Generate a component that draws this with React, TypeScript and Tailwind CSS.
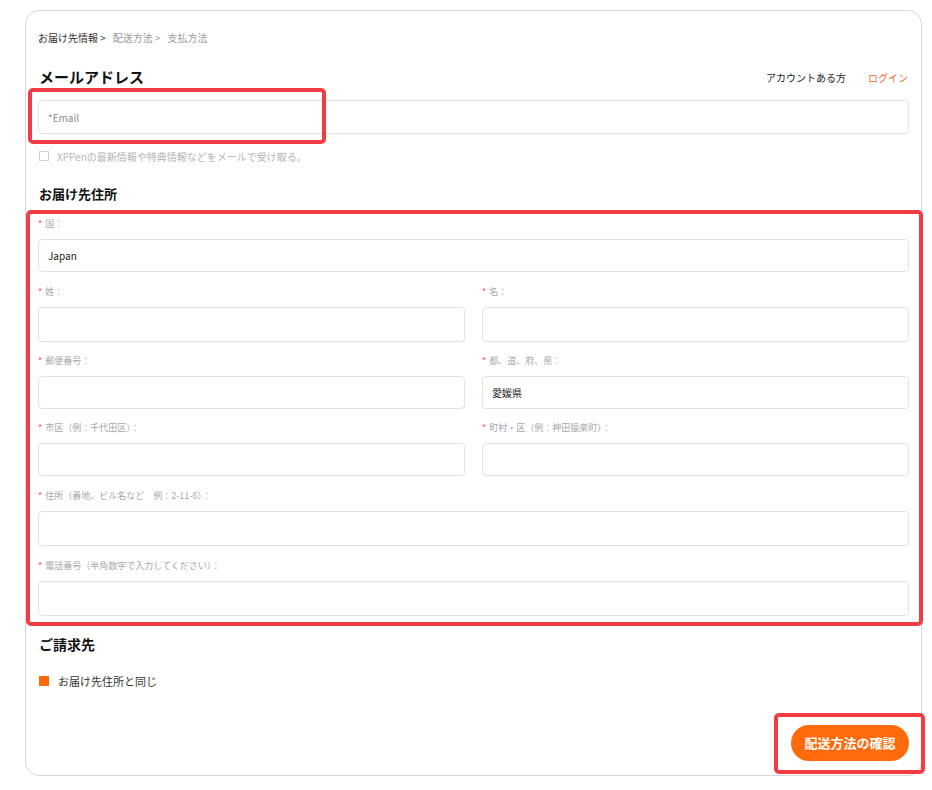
const font = { fontFamily: '"Noto Sans CJK JP", "Noto Sans", sans-serif' }

function Label({ text }: { text: string }) {
  return (
    <div className="flex h-[12px] items-center gap-[3px] text-[9px] leading-[12px] text-[#a8a8a8]">
      <span className="text-[#f05050]">*</span>
      <span>{text}</span>
    </div>
  )
}

function Field({
  label,
  value,
  h = "h-[34px]",
}: {
  label: string
  value?: string
  h?: string
}) {
  return (
    <div className="flex flex-col">
      <Label text={label} />
      <div
        className={`mt-[9px] flex ${h} items-center rounded-[4px] border border-[#e2e2e2] bg-white px-[9px] text-[10px] text-[#222]`}
      >
        {value}
      </div>
    </div>
  )
}

export default function App() {
  return (
    <div className="relative h-[790px] w-[932px] bg-white" style={font}>
      <div className="ml-[25px] pt-[10px]">
        <div className="flex h-[766px] w-[897px] flex-col rounded-[14px] border border-[#d6d6d6] px-[12px]">
          <div className="mt-[20px] flex items-center gap-[7px] text-[10px] leading-[14px] text-[#9a9a9a]">
            <span className="text-[#333]">お届け先情報 &gt;</span>
            <span>配送方法 &gt;</span>
            <span>支払方法</span>
          </div>

          <div className="mt-[22px] flex items-center justify-between pl-[1px] pr-[1px]">
            <h2 className="text-[15px] font-bold leading-[20px] text-[#111]">メールアドレス</h2>
            <div className="flex items-center gap-[22px] text-[10px]">
              <span className="text-[#222]">アカウントある方</span>
              <span className="text-[#f0702a]">ログイン</span>
            </div>
          </div>

          <div className="mt-[13px] flex h-[34px] items-center rounded-[4px] border border-[#e2e2e2] px-[9px] text-[10px] text-[#8a8a8a]">
            *Email
          </div>

          <div className="mt-[15px] flex h-[14px] items-center gap-[8px] pl-[1px] text-[10px] text-[#b5b5b5]">
            <span className="h-[10px] w-[10px] border border-[#cfcfcf]" />
            <span>XPPenの最新情報や特典情報などをメールで受け取る。</span>
          </div>

          <h3 className="mt-[22px] pl-[1px] text-[13px] font-bold leading-[18px] text-[#111]">お届け先住所</h3>

          <div className="mt-[15px] flex flex-col gap-[14px]">
            <Field label="国：" value="Japan" h="h-[33px]" />
            <div className="grid grid-cols-2 gap-x-[17px] gap-y-[13px]">
              <Field label="姓：" h="h-[35px]" />
              <Field label="名：" h="h-[35px]" />
              <Field label="郵便番号：" h="h-[33px]" />
              <Field label="都、道、府、県：" value="愛媛県" h="h-[33px]" />
              <Field label="市区（例：千代田区）：" h="h-[33px]" />
              <Field label="町村・区（例：神田猿楽町）：" h="h-[33px]" />
            </div>
            <Field label="住所（番地、ビル名など　例：2-11-6）：" h="h-[35px]" />
            <Field label="電話番号（半角数字で入力してください）：" h="h-[35px]" />
          </div>

          <h3 className="mt-[18px] pl-[1px] text-[14px] font-bold leading-[20px] text-[#111]">ご請求先</h3>

          <div className="mt-[19px] flex items-center gap-[9px] pl-[1px] text-[11px] text-[#333]">
            <span className="h-[10px] w-[10px] bg-[#ff6a00]" />
            <span>お届け先住所と同じ</span>
          </div>

          <div className="mt-[35px] flex justify-end">
            <button className="flex h-[36px] w-[118px] items-center justify-center rounded-full bg-[#ff6a0a] text-[13px] font-bold text-white">
              配送方法の確認
            </button>
          </div>
        </div>
      </div>

      <div className="absolute left-[28px] top-[88px] h-[56px] w-[298px] rounded-[5px] border-4 border-[#f03c42]" />
      <div className="absolute left-[26px] top-[210px] h-[416px] w-[897px] rounded-[5px] border-4 border-[#f03c42]" />
      <div className="absolute left-[774px] top-[713px] h-[61px] w-[151px] rounded-[5px] border-4 border-[#f03c42]" />
    </div>
  )
}
